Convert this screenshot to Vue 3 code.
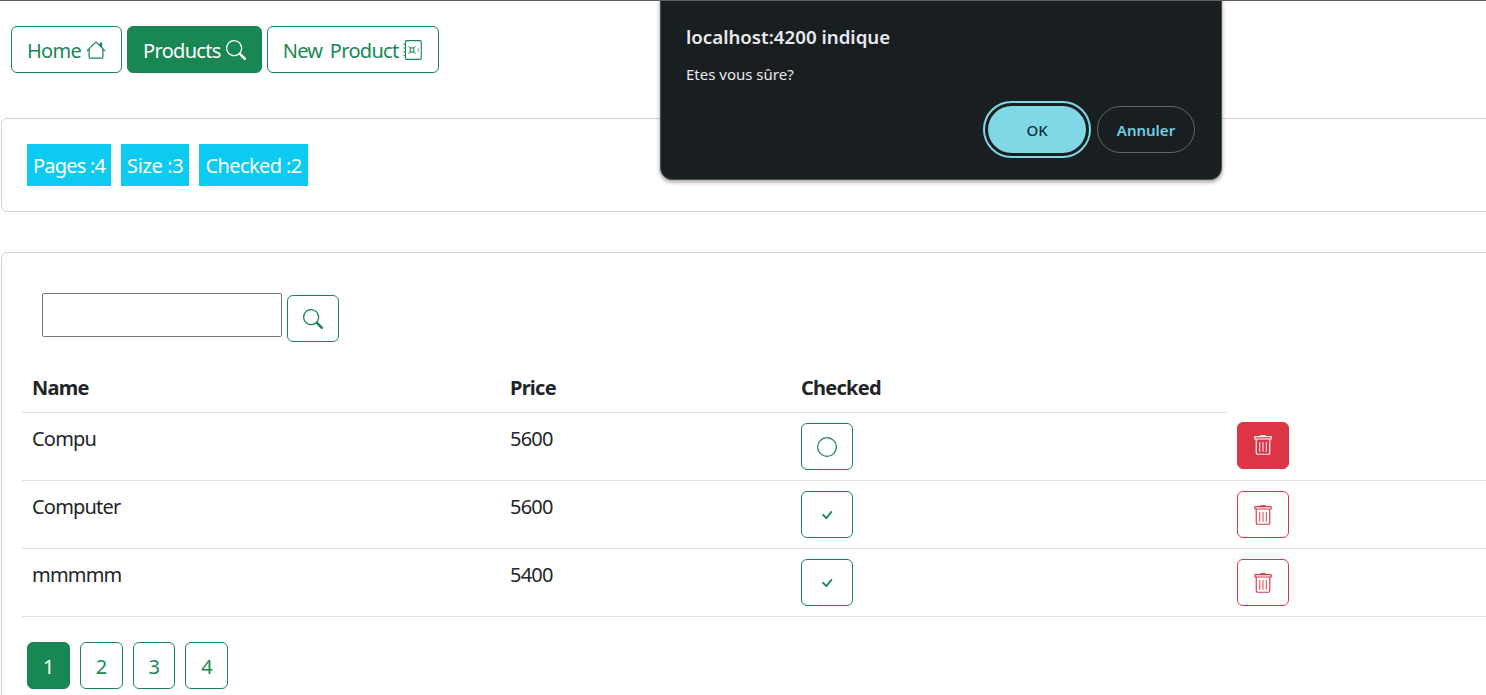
<template>
  <div class="page">
    <nav class="nav">
      <button class="btn btn-green"><span class="label">Home</span>
        <svg class="icon" viewBox="0 0 16 16"><path d="M8.707 1.5a1 1 0 0 0-1.414 0L.646 8.146a.5.5 0 0 0 .708.708L2 8.207V13.5A1.5 1.5 0 0 0 3.5 15h9a1.5 1.5 0 0 0 1.5-1.5V8.207l.646.647a.5.5 0 0 0 .708-.708L13 5.793V2.5a.5.5 0 0 0-.5-.5h-1a.5.5 0 0 0-.5.5v1.293L8.707 1.5ZM13 7.207V13.5a.5.5 0 0 1-.5.5h-9a.5.5 0 0 1-.5-.5V7.207l5-5 5 5Z"/></svg>
      </button>
      <button class="btn btn-green active"><span class="label">Products</span>
        <svg class="icon" viewBox="0 0 16 16"><path :d="searchPath"/></svg>
      </button>
      <button class="btn btn-green"><span class="label">New Product</span>
        <svg class="icon" viewBox="0 0 16 16">
          <path d="M3 .5h10.6a1 1 0 0 1 1 1v13a1 1 0 0 1-1 1H3a1 1 0 0 1-1-1V1.500a1 1 0 0 1 1-1z" fill="none" stroke="currentColor" stroke-width=".9"/>
          <path d="M.5 3.500h1.500M.5 6.500h1.500M.5 9.500h1.500M.5 12.500h1.500" fill="none" stroke="currentColor"/>
          <path d="M4.500 5l1.800 1.800M10 5L8.200 6.800M4.500 11l1.800-1.800M10 11L8.200 9.200" fill="none" stroke="currentColor" stroke-width=".8"/>
          <rect x="5.800" y="6.300" width="2.900" height="3.400" fill="none" stroke="currentColor" stroke-width=".8"/>
          <path d="M12.200 6.500v3" fill="none" stroke="currentColor" stroke-width="1.100" opacity=".5"/>
        </svg>
      </button>
    </nav>

    <section class="card card-stats">
      <span class="badge">Pages :4</span>
      <span class="badge">Size :3</span>
      <span class="badge">Checked :2</span>
    </section>

    <section class="card card-list">
      <form class="search" @submit.prevent>
        <input class="search-input" type="text" />
        <button class="btn btn-green btn-icon">
          <svg class="icon" viewBox="0 0 16 16"><path :d="searchPath"/></svg>
        </button>
      </form>

      <table class="table">
        <colgroup>
          <col class="col-name" />
          <col class="col-price" />
          <col class="col-checked" />
          <col />
        </colgroup>
        <thead>
          <tr>
            <th>Name</th>
            <th>Price</th>
            <th>Checked</th>
            <th class="th-empty"></th>
          </tr>
        </thead>
        <tbody>
          <tr v-for="(p, i) in products" :key="p.name">
            <td><span class="cell-text">{{ p.name }}</span></td>
            <td><span class="cell-text">{{ p.price }}</span></td>
            <td>
              <button class="btn btn-green btn-icon">
                <svg class="icon" viewBox="0 0 16 16">
                  <path v-if="p.checked" d="M10.97 4.97a.75.75 0 0 1 1.07 1.05l-3.99 4.99a.75.75 0 0 1-1.08.02L4.324 8.384a.75.75 0 1 1 1.06-1.06l2.094 2.093 3.473-4.425a.267.267 0 0 1 .02-.022z"/>
                  <path v-else d="M8 15A7 7 0 1 1 8 1a7 7 0 0 1 0 14zm0 1A8 8 0 1 0 8 0a8 8 0 0 0 0 16z"/>
                </svg>
              </button>
            </td>
            <td>
              <button class="btn btn-red btn-icon" :class="{ hover: i === 0 }">
                <svg class="icon" viewBox="0 0 16 16">
                  <path d="M6 1V.5h4V1" fill="none" stroke="currentColor" stroke-width=".8"/>
                  <rect x="1.400" y="1.300" width="13.200" height="1.900" rx=".5" fill="none" stroke="currentColor" stroke-width=".9"/>
                  <path d="M2.600 3.200v10.900a1.300 1.300 0 0 0 1.300 1.300h8.200a1.300 1.300 0 0 0 1.300-1.300V3.200" fill="none" stroke="currentColor" stroke-width=".9"/>
                  <path d="M5.300 5.500v7.800M8 5.500v7.800M10.700 5.500v7.800" fill="none" stroke="currentColor" stroke-width="1" opacity=".75"/>
                </svg>
              </button>
            </td>
          </tr>
        </tbody>
      </table>

      <div class="pages">
        <button v-for="n in 4" :key="n" class="btn btn-green" :class="{ active: n === 1 }"><span class="label">{{ n }}</span></button>
      </div>
    </section>

    <!-- boite de confirmation du navigateur -->
    <div class="dialog">
      <div class="dialog-title">localhost:4200 indique</div>
      <div class="dialog-text">Etes vous sûre?</div>
      <div class="dialog-actions">
        <button class="dlg-btn dlg-ok">OK</button>
        <button class="dlg-btn dlg-cancel">Annuler</button>
      </div>
    </div>
  </div>
</template>

<script setup>
const searchPath = 'M11.742 10.344a6.5 6.5 0 1 0-1.397 1.398h-.001c.03.04.062.078.098.115l3.85 3.85a1 1 0 0 0 1.415-1.414l-3.85-3.85a1.007 1.007 0 0 0-.115-.1zM12 6.5a5.5 5.5 0 1 1-11 0 5.5 5.5 0 0 1 11 0z'

const products = [
  { name: 'Compu', price: 5600, checked: false },
  { name: 'Computer', price: 5600, checked: true },
  { name: 'mmmmm', price: 5400, checked: true }
]
</script>

<style>
html, body {
  margin: 0;
  background: #fff;
}
</style>

<style scoped>
.page {
  position: relative;
  width: 1486px;
  height: 695px;
  overflow: hidden;
  box-sizing: border-box;
  border-top: 1px solid #5f5f5f;
  font-family: "Noto Sans", "Open Sans", sans-serif;
  font-size: 20px;
  line-height: 30px;
  color: #212529;
}

.nav {
  display: flex;
  gap: 5px;
  padding: 25px 0 0 11px;
}

.btn {
  box-sizing: border-box;
  height: 47px;
  padding: 0 15px;
  border: 1px solid;
  border-radius: 6px;
  background: #fff;
  font: inherit;
  letter-spacing: -0.7px;
  display: inline-flex;
  align-items: center;
  justify-content: center;
  gap: 5px;
}

.label {
  padding-top: 2px;
  word-spacing: 3px;
}

.btn-green {
  color: #198754;
  border-color: #198754;
}

.btn-green.active {
  background: #198754;
  color: #fff;
}

.btn-red {
  color: #dc3545;
  border-color: #dc3545;
}

.btn-red.hover {
  background: #dc3545;
  color: #fff;
}

.btn-icon {
  width: 52px;
  padding: 0;
}

.icon {
  width: 20px;
  height: 20px;
  fill: currentColor;
  flex: none;
}

.card {
  width: 1520px;
  margin-left: 1px;
  box-sizing: border-box;
  border: 1px solid #d2d2d2;
  border-radius: 6px;
  background: #fff;
}

.card-stats {
  display: flex;
  gap: 10px;
  margin-top: 45px;
  padding: 25px;
}

.badge {
  height: 42px;
  padding: 7px 6px 5px;
  box-sizing: border-box;
  background: #0dcaf0;
  color: #fff;
  letter-spacing: -0.6px;
}

.badge:nth-child(1) {
  letter-spacing: -0.8px;
}

.badge:nth-child(2) {
  letter-spacing: -0.35px;
}

.card-list {
  margin-top: 40px;
  padding: 40px 20px 30px;
}

.search {
  display: flex;
  align-items: flex-start;
  gap: 5px;
  padding-left: 20px;
}

.search-input {
  width: 240px;
  height: 44px;
  box-sizing: border-box;
  border: 1px solid #767676;
  border-radius: 2px;
}

.search .btn {
  margin-top: 2px;
}

.table {
  width: 100%;
  margin-top: 21px;
  border-collapse: collapse;
  table-layout: fixed;
}

.col-name { width: 478px; }
.col-price { width: 291px; }
.col-checked { width: 436px; }

th, td {
  padding: 10px;
  text-align: left;
  vertical-align: top;
  border-bottom: 1px solid #dee2e6;
}

th {
  font-weight: 700;
  padding-bottom: 9px;
  letter-spacing: -0.75px;
}

td {
  height: 68px;
  box-sizing: border-box;
  letter-spacing: -0.8px;
}

.cell-text {
  display: block;
  padding-top: 1px;
}

td .btn {
  display: flex;
}

td .btn-red.hover {
  margin-top: -1px;
}

.th-empty {
  border-bottom: none;
}

.pages {
  display: flex;
  gap: 10px;
  margin: 25px 0 0 5px;
}

.dialog {
  position: absolute;
  top: -13px;
  left: 660px;
  width: 562px;
  height: 192px;
  box-sizing: border-box;
  padding: 35px 26px 0 25px;
  background: #191e21;
  border: 1px solid #4a4f52;
  border-radius: 12px;
  box-shadow: 0 2px 4px rgba(0, 0, 0, 0.4);
  color: #e8eaed;
  line-height: normal;
  display: flex;
  flex-direction: column;
}

.dialog-title {
  font-size: 18.700px;
  font-weight: 600;
}

.dialog-text {
  margin-top: 15px;
  font-size: 15px;
}

.dialog-actions {
  display: flex;
  justify-content: flex-end;
  gap: 11px;
  margin-top: 22px;
}

.dlg-btn {
  width: 98px;
  height: 47px;
  box-sizing: border-box;
  border-radius: 24px;
  font-family: inherit;
  font-size: 15px;
  font-weight: 600;
}

.dlg-ok {
  background: #7fd8e6;
  border: none;
  color: #0f2f3f;
  outline: 2px solid #7fd8e6;
  outline-offset: 3px;
  font-weight: 500;
}

.dlg-cancel {
  background: transparent;
  border: 1px solid #5f6a6e;
  color: #6fd0e6;
}
</style>
